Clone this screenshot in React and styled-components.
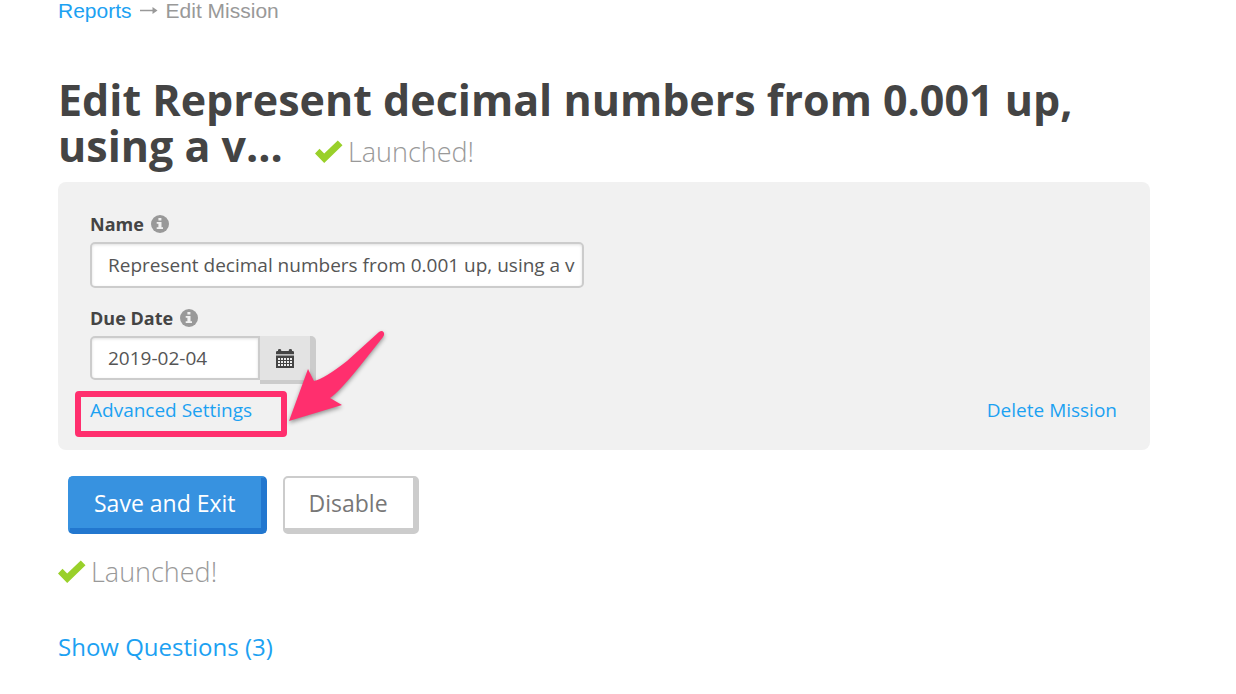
import React, { Component } from "react";
import styled, { createGlobalStyle } from "styled-components";

export default class App extends Component {
    state = {
        name: "Represent decimal numbers from 0.001 up, using a v",
        dueDate: "2019-02-04"
    };
    handleChange = e => {
        this.setState({ [e.target.name]: e.target.value });
    };
    render() {
        return (
            <>
                <GlobalStyle />
                <Page>
                    <Breadcrumb aria-label="Breadcrumb">
                        <TextLink href="#reports">Reports</TextLink>
                        <CrumbArrow />
                        <span>Edit Mission</span>
                    </Breadcrumb>
                    <Title>
                        Edit Represent decimal numbers from 0.001 up, using a
                        v...
                        <TitleStatus>
                            <CheckIcon />
                            Launched!
                        </TitleStatus>
                    </Title>
                    <Panel>
                        <Field>
                            <FieldLabel htmlFor="name">
                                Name <InfoIcon />
                            </FieldLabel>
                            <NameInput
                                id="name"
                                name="name"
                                value={this.state.name}
                                onChange={this.handleChange}
                            />
                        </Field>
                        <Field>
                            <FieldLabel htmlFor="dueDate">
                                Due Date <InfoIcon />
                            </FieldLabel>
                            <DateGroup>
                                <DateInput
                                    id="dueDate"
                                    name="dueDate"
                                    value={this.state.dueDate}
                                    onChange={this.handleChange}
                                />
                                <CalendarButton
                                    type="button"
                                    aria-label="Pick a date"
                                >
                                    <CalendarIcon />
                                </CalendarButton>
                            </DateGroup>
                        </Field>
                        <PanelLinks>
                            <Callout>
                                <TextLink href="#advanced">
                                    Advanced Settings
                                </TextLink>
                                <CalloutFrame />
                                <CalloutArrow />
                            </Callout>
                            <TextLink href="#delete">Delete Mission</TextLink>
                        </PanelLinks>
                    </Panel>
                    <Actions>
                        <ActionButton type="button" $primary>
                            Save and Exit
                        </ActionButton>
                        <ActionButton type="button">Disable</ActionButton>
                    </Actions>
                    <Status>
                        <CheckIcon />
                        Launched!
                    </Status>
                    <QuestionsLink href="#questions">
                        Show Questions (3)
                    </QuestionsLink>
                </Page>
            </>
        );
    }
}

const CrumbArrow = () => (
    <svg width="18" height="10" viewBox="0 0 18 10" aria-hidden="true">
        <path d="M0 4.5H14" stroke="#999" strokeWidth="1.5" />
        <path d="M12.5 1 17.5 4.5 12.5 8Z" fill="#999" />
    </svg>
);

const CheckIcon = () => (
    <svg width="28" height="24" viewBox="0 0 28 24" aria-hidden="true">
        <path
            d="M0 13.5 4.5 8.8 9.2 13.4 22.8 0.5 27.5 5.2 9.2 23Z"
            fill="#99d02a"
        />
    </svg>
);

const InfoIcon = () => (
    <svg width="18" height="18" viewBox="0 0 18 18" aria-hidden="true">
        <circle cx="9" cy="9" r="9" fill="#999" />
        <path
            d="M7.4 2.9h3v2.5h-3zM5.7 7h4.8v5.2H12V14H5.7v-1.8h1.7V8.8H5.7z"
            fill="#f1f1f1"
        />
    </svg>
);

const CalendarIcon = () => (
    <svg width="18" height="19" viewBox="0 0 18 19" aria-hidden="true">
        <path
            d="M0 5.2V3.2Q0 2 1.2 2H2V1Q2 0 3.6 0T5.2 1V2H12.8V1Q12.8 0 14.4 0T16 1V2H16.8Q18 2 18 3.2V5.2Z"
            fill="#444"
        />
        <path d="M0 6.5H18V19H0Z" fill="#444" />
        <path
            d="M2 9h2v2H2zM5 9h2v2H5zM8 9h2v2H8zM11 9h2v2h-2zM14 9h2v2h-2zM2 12h2v2H2zM5 12h2v2H5zM8 12h2v2H8zM11 12h2v2h-2zM14 12h2v2h-2zM2 15h2v2H2zM5 15h2v2H5zM8 15h2v2H8zM11 15h2v2h-2zM14 15h2v2h-2z"
            fill="#eee"
        />
    </svg>
);

const CalloutArrow = () => (
    <ArrowSvg width="100" height="96" viewBox="0 0 100 96" aria-hidden="true">
        <path
            d="M2 91 21 39 27 51Q37 49 60 31L92 2Q95 0 96.5 2T96 7L73 36Q52 62 43 68L55 75Z"
            fill="#ff2f6e"
        />
    </ArrowSvg>
);

const GlobalStyle = createGlobalStyle`
    *, *::before, *::after {
        box-sizing: border-box;
    }
    body {
        margin: 0;
        background: #fff;
        color: #444;
        font-family: "Open Sans", sans-serif;
        font-size: 19px;
        line-height: 26px;
    }
    input, button {
        font: inherit;
    }
    svg {
        flex: none;
    }
`;

const Page = styled.main`
    padding: 0 86px 24px 58px;
`;

const TextLink = styled.a`
    color: #1ca1f2;
    text-decoration: none;
`;

const Breadcrumb = styled.nav`
    display: flex;
    align-items: center;
    gap: 8px;
    height: 22px;
    color: #999;
    font-family: "Liberation Sans", sans-serif;
    font-size: 21px;
`;

const Title = styled.h1`
    margin: 55px 0 13px;
    font-size: 43px;
    font-weight: 700;
    line-height: 46px;
`;

const Status = styled.div`
    display: flex;
    align-items: center;
    gap: 5px;
    color: #999;
    font-size: 27px;
    font-weight: 300;
    line-height: 38px;
`;

const TitleStatus = styled(Status)`
    display: inline-flex;
    margin-left: 32px;
    line-height: 30px;
    vertical-align: -2px;
`;

const Panel = styled.section`
    padding: 29px 33px 27px 32px;
    border-radius: 8px;
    background: #f1f1f1;
`;

const Field = styled.div`
    margin-bottom: 17px;
`;

const FieldLabel = styled.label`
    display: flex;
    align-items: center;
    gap: 7px;
    margin-bottom: 5px;
    font-size: 18px;
    font-weight: 700;
`;

const TextInput = styled.input`
    display: block;
    padding: 0 6px 0 16px;
    border: 2px solid #ccc;
    border-radius: 5px;
    background: #fff;
    box-shadow: inset 0 1px 3px rgba(0, 0, 0, 0.12);
    color: #555;
    outline: none;
`;

const NameInput = styled(TextInput)`
    width: 100%;
    max-width: 494px;
    height: 46px;
`;

const DateGroup = styled.div`
    display: flex;
`;

const DateInput = styled(TextInput)`
    width: 170px;
    height: 44px;
    border-radius: 5px 0 0 5px;
`;

const CalendarButton = styled.button`
    display: flex;
    align-items: center;
    justify-content: center;
    width: 56px;
    height: 44px;
    padding: 0;
    border: 0;
    border-right: 6px solid #ccc;
    border-radius: 0 5px 0 0;
    background: #e3e3e3;
    box-shadow: 0 4px 0 #ccc;
`;

const PanelLinks = styled.div`
    display: flex;
    justify-content: space-between;
`;

const Callout = styled.div`
    position: relative;
`;

const CalloutFrame = styled.span`
    position: absolute;
    inset: -6px -35px -14px -15px;
    border: 6px solid #ff2f6e;
    border-radius: 4px;
    pointer-events: none;
`;

const ArrowSvg = styled.svg`
    position: absolute;
    bottom: -3px;
    left: 197px;
    filter: drop-shadow(0 2px 2px rgba(0, 0, 0, 0.4));
    pointer-events: none;
`;

const Actions = styled.div`
    display: flex;
    gap: 16px;
    margin: 26px 10px 19px;
`;

const ActionButton = styled.button`
    height: 58px;
    padding: 0 25px 0 24px;
    border: 2px solid ${props => (props.$primary ? "#3792e0" : "#ccc")};
    border-right: 6px solid ${props => (props.$primary ? "#2277cf" : "#ccc")};
    border-bottom: 6px solid ${props => (props.$primary ? "#2277cf" : "#ccc")};
    border-radius: 5px;
    background: ${props => (props.$primary ? "#3792e0" : "#fff")};
    color: ${props => (props.$primary ? "#fff" : "#777")};
    font-size: 23px;
    cursor: pointer;
`;

const QuestionsLink = styled(TextLink)`
    display: inline-block;
    margin-top: 42px;
    font-size: 24px;
    line-height: 28px;
`;
